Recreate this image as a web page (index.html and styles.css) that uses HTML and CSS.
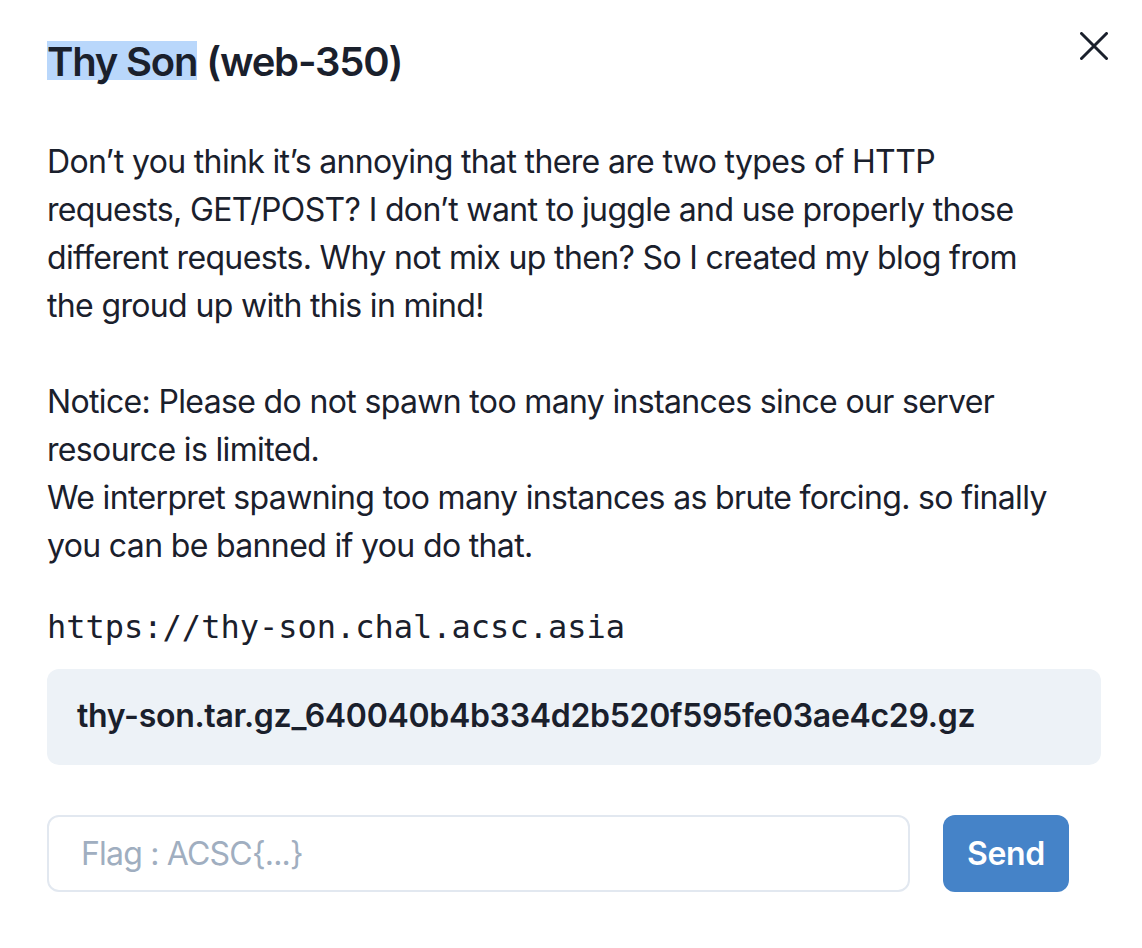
FILE: index.html
```html
<!DOCTYPE html>
<html>
<head>
<meta charset="utf-8">
<link rel="stylesheet" href="styles.css">
</head>
<body>
<div class="modal">
  <header class="modal-header">
    <h1 class="title"><span class="sel">Thy Son</span> (web-350)</h1>
    <button class="close" aria-label="Close">
      <svg width="28" height="28" viewBox="0 0 28 28"><path d="M1.5 1.5 L26.5 26.5 M26.5 1.5 L1.5 26.5" stroke="#1a202c" stroke-width="3" stroke-linecap="round"/></svg>
    </button>
  </header>
  <div class="desc">
    <p>Don’t you think it’s annoying that there are two types of HTTP requests, GET/POST? I don’t want to juggle and use properly those different requests. Why not mix up then? So I created my blog from the groud up with this in mind!<br><br>Notice: Please do not spawn too many instances since our server resource is limited.<br>We interpret spawning too many instances as brute forcing. so finally you can be banned if you do that.</p>
  </div>
  <div class="url">https://thy-son.chal.acsc.asia</div>
  <div class="file">thy-son.tar.gz_640040b4b334d2b520f595fe03ae4c29.gz</div>
  <form class="flag-form">
    <input class="flag-input" type="text" placeholder="Flag : ACSC{...}">
    <button class="send" type="button">Send</button>
  </form>
</div>
</body>
</html>
```
FILE: styles.css
```css
html, body {
  margin: 0;
  padding: 0;
  background: #ffffff;
}
body {
  font-family: Inter, "Noto Sans", sans-serif;
  color: #1a202c;
}
.modal {
  width: 1142px;
  height: 948px;
  box-sizing: border-box;
  padding: 0 41px 0 47px;
}
.modal-header {
  display: flex;
  justify-content: space-between;
  align-items: flex-start;
  height: 138px;
}
.title {
  margin: 38px 0 0 0;
  font-size: 40px;
  font-weight: 600;
  line-height: 48px;
  letter-spacing: -1.2px;
}
.sel {
  background: linear-gradient(to bottom, transparent 0, transparent 4px, #b9d7fb 4px, #b9d7fb 43px, transparent 43px);
}
.close {
  margin: 32px -7px 0 0;
  width: 28px;
  height: 28px;
  padding: 0;
  border: none;
  background: transparent;
  display: block;
}
.close svg { display: block; }
.desc {
  width: 1005px;
}
.desc p {
  margin: 0;
  font-size: 32px;
  line-height: 48px;
  letter-spacing: -0.65px;
}
.url {
  margin-top: 33px;
  font-family: "DejaVu Sans Mono", "Liberation Mono", monospace;
  font-size: 32px;
  line-height: 48px;
}
.file {
  margin-top: 18px;
  background: #edf2f7;
  border-radius: 12px;
  height: 96px;
  box-sizing: border-box;
  display: flex;
  align-items: center;
  padding: 0 0 4px 30px;
  font-size: 32px;
  font-weight: 600;
  letter-spacing: -0.3px;
}
.flag-form {
  margin-top: 50px;
  display: flex;
  gap: 33px;
}
.flag-input {
  width: 863px;
  height: 77px;
  box-sizing: border-box;
  border: 2px solid #e2e8f0;
  border-radius: 12px;
  padding: 0 32px;
  font-family: Inter, sans-serif;
  font-size: 32px;
  letter-spacing: -0.8px;
  color: #1a202c;
  outline: none;
}
.flag-input::placeholder {
  color: #a0aec0;
}
.send {
  width: 126px;
  height: 77px;
  border: none;
  border-radius: 12px;
  background: #4583c8;
  color: #ffffff;
  font-family: Inter, sans-serif;
  font-size: 32px;
  font-weight: 600;
  letter-spacing: -0.3px;
  padding: 0;
}
```
